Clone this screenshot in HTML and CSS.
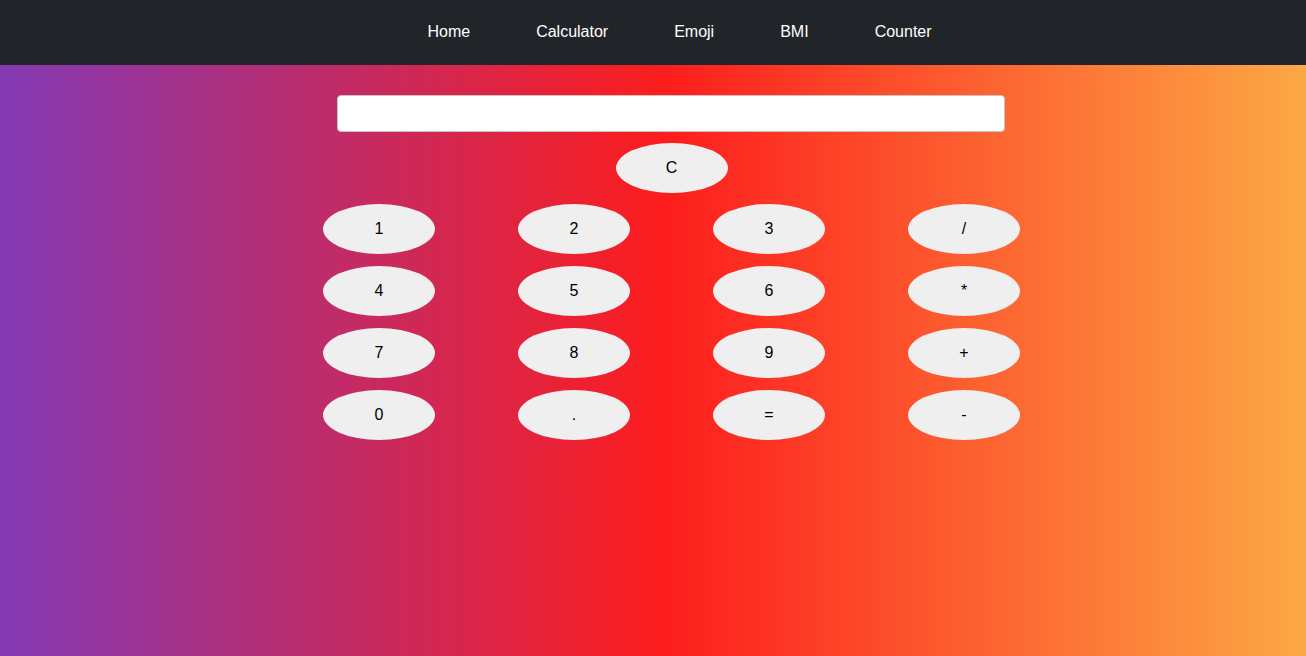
FILE: index.html
```html
<!DOCTYPE html>
<html>
<head>
<meta charset="utf-8">
<link rel="stylesheet" href="styles.css">
</head>
<body>
<nav class="navbar">
  <ul class="nav-list">
    <li><a href="#">Home</a></li>
    <li><a href="#">Calculator</a></li>
    <li><a href="#">Emoji</a></li>
    <li><a href="#">BMI</a></li>
    <li><a href="#">Counter</a></li>
  </ul>
</nav>
<main class="main">
  <div class="calc">
    <input class="display" type="text">
    <button class="btn clear">C</button>
    <div class="keys">
      <button class="btn">1</button>
      <button class="btn">2</button>
      <button class="btn">3</button>
      <button class="btn">/</button>
      <button class="btn">4</button>
      <button class="btn">5</button>
      <button class="btn">6</button>
      <button class="btn">*</button>
      <button class="btn">7</button>
      <button class="btn">8</button>
      <button class="btn">9</button>
      <button class="btn">+</button>
      <button class="btn">0</button>
      <button class="btn">.</button>
      <button class="btn">=</button>
      <button class="btn">-</button>
    </div>
  </div>
</main>
</body>
</html>
```
FILE: styles.css
```css
html, body {
  margin: 0;
  padding: 0;
  height: 100%;
}
body {
  font-family: "Liberation Sans", Arial, sans-serif;
  background: linear-gradient(90deg, #833ab4 0%, #fd1d1d 51%, #fca845 100%);
  min-height: 656px;
}
.navbar {
  background: #212529;
  height: 65px;
  display: flex;
  justify-content: center;
  align-items: center;
}
.nav-list {
  list-style: none;
  margin: 0;
  padding: 0 0 0 53px;
  display: flex;
}
.nav-list li {
  padding: 0 33px;
}
.nav-list a {
  color: #ffffff;
  text-decoration: none;
  font-size: 16px;
  line-height: 20px;
  display: block;
  margin-bottom: 1px;
}
.main {
  display: flex;
  justify-content: center;
  padding-left: 37px;
  padding-top: 30px;
}
.calc {
  width: 780px;
  display: flex;
  flex-direction: column;
  align-items: center;
}
.display {
  width: 668px;
  height: 37px;
  box-sizing: border-box;
  border: 1px solid #c4c4c4;
  border-radius: 4px;
  background: #fff;
  margin: 0 1px 11px 0;
  padding: 0 8px;
  font-size: 16px;
}
.btn {
  width: 112px;
  height: 50px;
  border: none;
  border-radius: 50%;
  background: #efefef;
  color: #000;
  font-family: "Liberation Sans", Arial, sans-serif;
  font-size: 16px;
  padding: 0;
  margin: 0;
}
.clear {
  margin-bottom: 11px;
}
.keys {
  display: grid;
  grid-template-columns: repeat(4, 1fr);
  row-gap: 12px;
  width: 780px;
  justify-items: center;
}
```
